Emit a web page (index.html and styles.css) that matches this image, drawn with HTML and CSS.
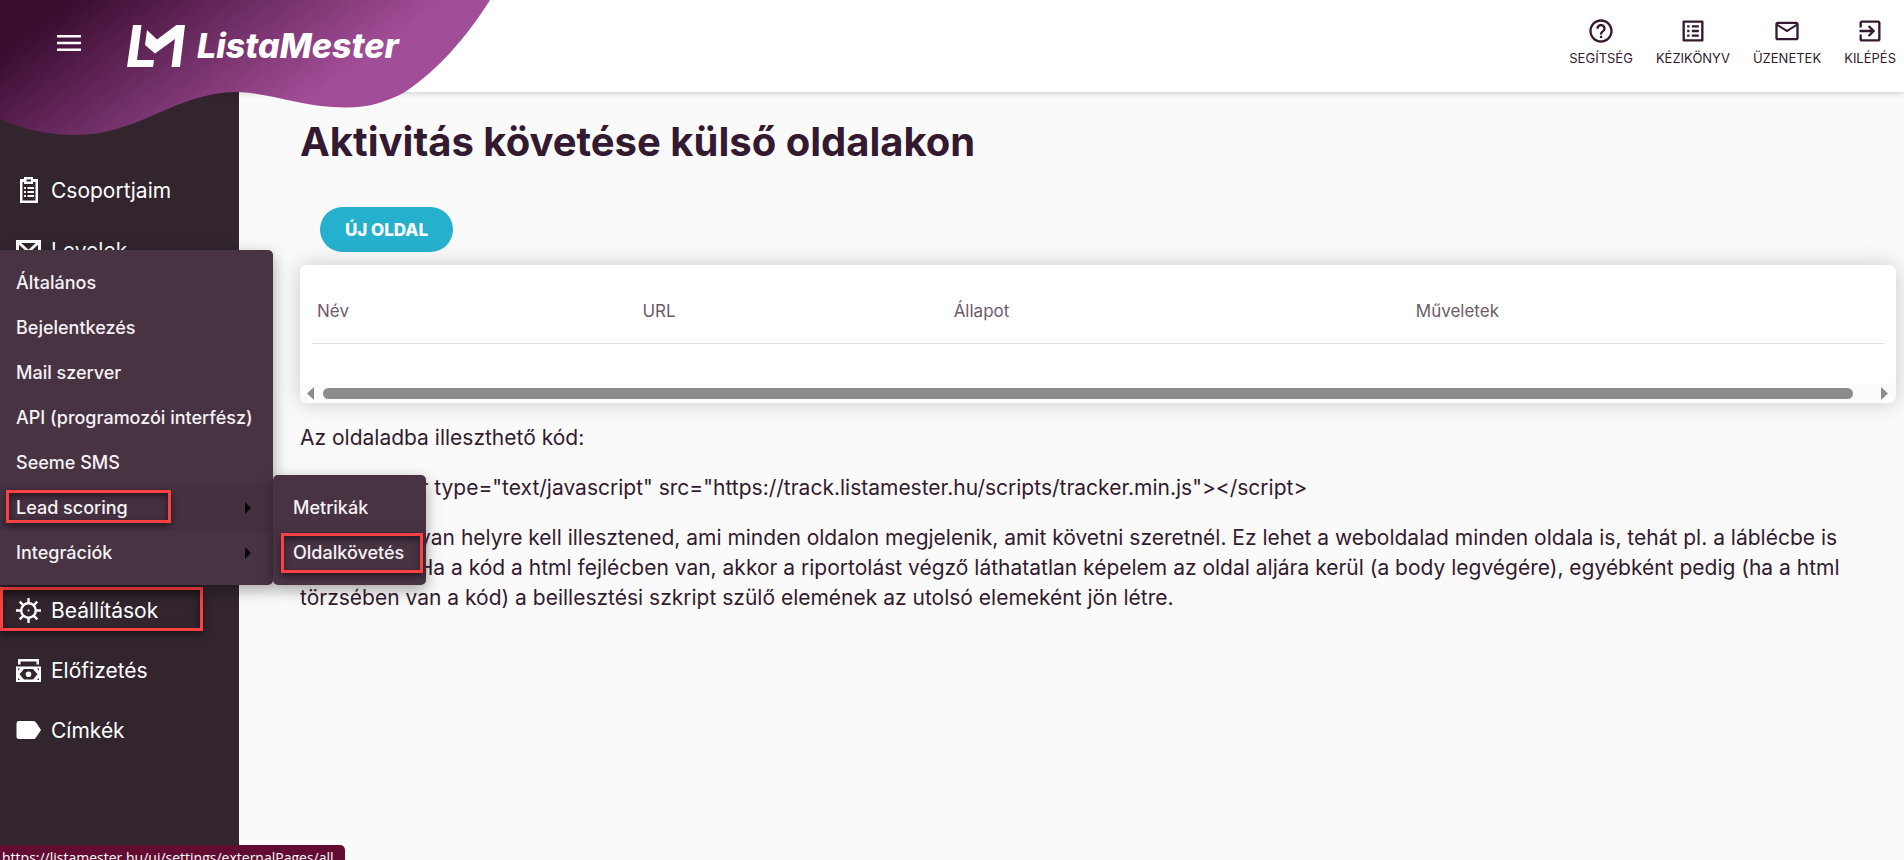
FILE: index.html
```html
<!DOCTYPE html>
<html lang="hu">
<head>
<meta charset="utf-8">
<title>ListaMester</title>
<link rel="stylesheet" href="styles.css">
</head>
<body>
<header class="topbar">
  <svg class="wave" width="490" height="136" viewBox="0 0 490 136" aria-hidden="true">
    <defs>
      <linearGradient id="wave-fill" gradientUnits="userSpaceOnUse" x1="26" y1="36" x2="154" y2="212">
        <stop offset="0" stop-color="#3a0d31"/>
        <stop offset="1" stop-color="#a24d97"/>
      </linearGradient>
    </defs>
    <path fill="url(#wave-fill)" d="M490 0C466 38 438 70 405 92C385 103 365 108 345 107.500C305 107.500 270 93 238 92C175 92 140 135 75 135C45 135 20 128 0 119V0Z"/>
  </svg>
  <div class="brand">
    <button class="burger" type="button" aria-label="Menü">
      <svg width="24" height="16" viewBox="0 0 24 16"><path fill="#fff" d="M0 0h24v2.600H0zM0 6.700h24v2.600H0zM0 13.400h24V16H0z"/></svg>
    </button>
    <a class="logo" href="#">
      <svg width="58" height="42" viewBox="0 0 58 42" aria-hidden="true"><path fill="#fff" d="M6 0h8.500L10 35h17l-1 7H0zM20 5l10 9.500L49.500 0H58l-5 42h-8.500L48 14 28 28.500 18 20z"/></svg>
      <span>ListaMester</span>
    </a>
  </div>
  <nav class="tools">
    <a href="#"><svg width="28" height="28" viewBox="0 0 24 24"><path d="M11 18h2v-2h-2v2zm1-16C6.480 2 2 6.480 2 12s4.480 10 10 10 10-4.480 10-10S17.520 2 12 2zm0 18c-4.410 0-8-3.590-8-8s3.590-8 8-8 8 3.590 8 8-3.590 8-8 8zm0-14c-2.210 0-4 1.790-4 4h2c0-1.100.9-2 2-2s2 .9 2 2c0 2-3 1.750-3 5h2c0-2.250 3-2.500 3-5 0-2.210-1.790-4-4-4z"/></svg>SEGÍTSÉG</a>
    <a href="#"><svg width="28" height="28" viewBox="0 0 24 24"><path d="M11 7h6v2h-6zm0 4h6v2h-6zm0 4h6v2h-6zM7 7h2v2H7zm0 4h2v2H7zm0 4h2v2H7zM20.100 3H3.900c-.5 0-.9.4-.9.900v16.200c0 .4.4.9.900.9h16.200c.4 0 .9-.5.9-.9V3.900c0-.5-.5-.9-.9-.9zM19 19H5V5h14v14z"/></svg>KÉZIKÖNYV</a>
    <a href="#"><svg width="28" height="28" viewBox="0 0 24 24"><path d="M20 4H4c-1.100 0-2 .9-2 2v12c0 1.100.9 2 2 2h16c1.100 0 2-.9 2-2V6c0-1.100-.9-2-2-2zm0 14H4V8l8 5 8-5v10zm-8-7L4 6h16l-8 5z"/></svg>ÜZENETEK</a>
    <a href="#"><svg width="28" height="28" viewBox="0 0 24 24"><path d="M10.090 15.590L11.500 17l5-5-5-5-1.410 1.410L12.670 11H3v2h9.670l-2.580 2.590zM19 3H5c-1.110 0-2 .9-2 2v4h2V5h14v14H5v-4H3v4c0 1.100.89 2 2 2h14c1.100 0 2-.9 2-2V5c0-1.100-.9-2-2-2z"/></svg>KILÉPÉS</a>
  </nav>
</header>

<div class="layout">
  <nav class="sidebar">
    <div class="group">
      <a href="#"><svg width="25" height="26" viewBox="0 0 25 26"><path fill="#fff" fill-rule="evenodd" d="M4 2h4V0h9v2h5v24H4zM6.500 5v18.500h13V5H17v2H8V5zM10.500 2.500v2h4.500v-2z"/><path fill="#fff" d="M8 10h2v2H8zM11.500 10H18v2h-6.500zM8 14h2v2H8zM11.500 14H18v2h-6.500zM8 18h2v2H8zM11.500 18H18v2h-6.500z"/></svg>Csoportjaim</a>
      <a href="#"><svg width="25" height="20" viewBox="0 0 25 20"><path fill="none" stroke="#fff" stroke-width="3" d="M1.500 1.500h22v17h-22zM2 2l10.500 9.500L23 2"/></svg>Levelek</a>
    </div>
    <div class="group lower">
      <a href="#" class="marked mark-side"><svg width="25" height="25" viewBox="0 0 25 25"><g fill="none" stroke="#fff" stroke-width="2.400"><circle cx="12.500" cy="12.500" r="7.300"/><path d="M12.500 0v5M12.500 20v5M0 12.500h5M20 12.500h5M3.700 3.700l3.500 3.500M17.800 17.800l3.500 3.500M3.700 21.300l3.500-3.500M17.800 7.200l3.500-3.500"/></g><circle cx="12.500" cy="12.500" r="1" fill="#fff"/></svg>Beállítások</a>
      <a href="#"><svg width="25" height="23" viewBox="0 0 25 23"><path fill="#fff" fill-rule="evenodd" d="M2 0h21v5.500h-2.500V2.500h-16v3H2zM0 7.500h25V23H0zM8 10L3.500 15.200 8 20.500h9l4.500-5.300L17 10zM2 9.500v2l2-2zM23 9.500h-2l2 2zM2 21v-2l2 2zM23 21h-2l2-2z"/><circle cx="12.500" cy="15.200" r="2.800" fill="#fff"/></svg>Előfizetés</a>
      <a href="#"><svg width="25" height="18" viewBox="0 0 25 18"><path fill="#fff" d="M3 0h14.500q1.500 0 2.500 1.500L25 9l-5 7.500q-1 1.500-2.500 1.500H3q-2.500 0-2.500-2.500v-13Q.500 0 3 0z"/></svg>Címkék</a>
    </div>
  </nav>

  <main class="content">
    <h1>Aktivitás követése külső oldalakon</h1>
    <button class="new-page" type="button">ÚJ OLDAL</button>
    <section class="card">
      <div class="table-area">
        <table>
          <thead><tr><th class="c-name">Név</th><th class="c-url">URL</th><th class="c-state">Állapot</th><th class="c-ops">Műveletek</th></tr></thead>
        </table>
      </div>
      <div class="scroller" aria-hidden="true">
        <svg width="7" height="13" viewBox="0 0 7 13"><path fill="#8b8b8b" d="M7 0v13L0 6.500z"/></svg>
        <span class="thumb"></span>
        <svg width="7" height="13" viewBox="0 0 7 13"><path fill="#8b8b8b" d="M0 0v13l7-6.500z"/></svg>
      </div>
    </section>
    <p>Az oldaladba illeszthető kód:</p>
    <p>&lt;script defer type="text/javascript" src="https://track.listamester.hu/scripts/tracker.min.js"&gt;&lt;/script&gt;</p>
    <p>A scriptet olyan helyre kell illesztened, ami minden oldalon megjelenik, amit követni szeretnél. Ez lehet a weboldalad minden oldala is, tehát pl. a láblécbe is<br>elhelyezve. Ha a kód a html fejlécben van, akkor a riportolást végző láthatatlan képelem az oldal aljára kerül (a body legvégére), egyébként pedig (ha a html<br>törzsében van a kód) a beillesztési szkript szülő elemének az utolsó elemeként jön létre.</p>
  </main>
</div>

<div class="menu">
  <a href="#">Általános</a>
  <a href="#">Bejelentkezés</a>
  <a href="#">Mail szerver</a>
  <a href="#">API (programozói interfész)</a>
  <a href="#">Seeme SMS</a>
  <a href="#" class="parent active marked mark-lead">Lead scoring</a>
  <a href="#" class="parent">Integrációk</a>
  <div class="menu submenu">
    <a href="#">Metrikák</a>
    <a href="#" class="marked mark-track">Oldalkövetés</a>
  </div>
</div>

<div class="status">https://listamester.hu/ui/settings/externalPages/all</div>
</body>
</html>
```
FILE: styles.css
```css
*, *::before, *::after { box-sizing: border-box; }
html { overflow: hidden; }
body {
  margin: 0;
  height: 100vh;
  overflow: hidden;
  display: flex;
  flex-direction: column;
  position: relative;
  background: #fafafa;
  color: #341a30;
  font-family: Inter, "Liberation Sans", sans-serif;
  font-size: 21px;
}
a { color: inherit; text-decoration: none; }
button { border: 0; font: inherit; cursor: pointer; }

.topbar {
  position: relative;
  z-index: 2;
  flex: none;
  height: 92px;
  display: flex;
  justify-content: space-between;
  background: #fff;
  box-shadow: 0 1px 6px rgba(0, 0, 0, .2);
}
.wave { position: absolute; left: 0; top: 0; }
.brand { position: relative; display: flex; align-items: flex-start; padding: 25px 0 0 57px; }
.burger { display: flex; margin-top: 10px; padding: 0; background: none; }
.logo { display: flex; margin-left: 46px; gap: 12px; color: #fff; font-size: 34px; line-height: 42px; font-weight: 800; font-style: italic; }
.tools { display: flex; gap: 23px; padding: 17px 8px 0 0; font-size: 13px; line-height: 26px; }
.tools a { display: flex; flex-direction: column; align-items: center; }
.tools svg { fill: #341a30; }

.layout { flex: 1; display: flex; min-height: 0; }
.sidebar { flex: none; width: 239px; padding-top: 68px; background: #32252e; color: #fff; }
.sidebar a { display: flex; align-items: center; gap: 10px; height: 60px; padding-left: 16px; position: relative; }
.sidebar .lower { margin-top: 300px; }

.content { flex: 1; min-width: 0; padding: 23px 8px 0 61px; }
h1 { margin: 0; font-size: 40px; line-height: 54px; font-weight: 700; }
.new-page {
  display: block;
  margin: 38px 0 13px 20px;
  height: 45px;
  padding: 0 25px;
  border-radius: 23px;
  background: #25b1cd;
  color: #fff;
  font-size: 17px;
  font-weight: 800;
}
.card { border-radius: 7px; background: #fcfcfc; box-shadow: 0 0 22px rgba(0, 0, 0, .2); margin-bottom: 20px; }
.table-area { height: 119px; padding: 14px 12px 0; border-radius: 7px; background: #fff; }
table { width: 100%; border-collapse: collapse; table-layout: fixed; }
th { height: 64px; padding: 0 5px; border-bottom: 1px solid #dedede; text-align: left; font-size: 17px; font-weight: 400; color: #6f5a6b; }
.c-name { width: 20.700%; }
.c-url { width: 19.800%; }
.c-state { width: 29.400%; }
.scroller { display: flex; align-items: center; height: 19px; padding: 0 8px 0 7px; }
.thumb { flex: 1; height: 11px; margin: 0 28px 0 9px; border-radius: 6px; background: #8b8b8b; }
.content p { margin: 0 0 20px; line-height: 30px; }

.menu {
  position: absolute;
  z-index: 3;
  left: 0;
  top: 250px;
  width: 273px;
  padding: 10px 0;
  border-radius: 0 5px 5px 0;
  background: #483343;
  color: #f6f2f5;
  box-shadow: 0 5px 15px rgba(0, 0, 0, .35);
  font-size: 18px;
  font-weight: 500;
  white-space: nowrap;
}
.menu a { position: relative; display: flex; align-items: center; justify-content: space-between; height: 45px; padding: 0 22px 0 16px; }
.menu .active { background: #453040; }
.parent::after { content: ""; border: 6px solid transparent; border-left-color: #0b070a; border-right: 0; }
.submenu { left: 100%; top: auto; bottom: 0; width: 153px; border-radius: 5px; }
.menu .submenu a, .submenu a { padding: 0 0 0 20px; }

.marked::before { content: ""; position: absolute; border: 3px solid #ff4040; box-shadow: 0 3px 7px rgba(0, 0, 0, .5), inset 0 3px 7px rgba(0, 0, 0, .5); }
.mark-side::before { left: 0; top: 7px; width: 203px; height: 44px; }
.mark-lead::before { left: 6px; top: 5px; width: 165px; height: 33px; }
.mark-track::before { left: 8px; top: 3px; width: 142px; height: 40px; }

.status {
  position: absolute;
  z-index: 4;
  left: 0;
  bottom: 0;
  height: 15px;
  overflow: hidden;
  padding: 0 11px 0 2px;
  border-radius: 0 5px 0 0;
  background: #620c31;
  color: #fff;
  font: 14px/26px "Open Sans", sans-serif;
}
```
